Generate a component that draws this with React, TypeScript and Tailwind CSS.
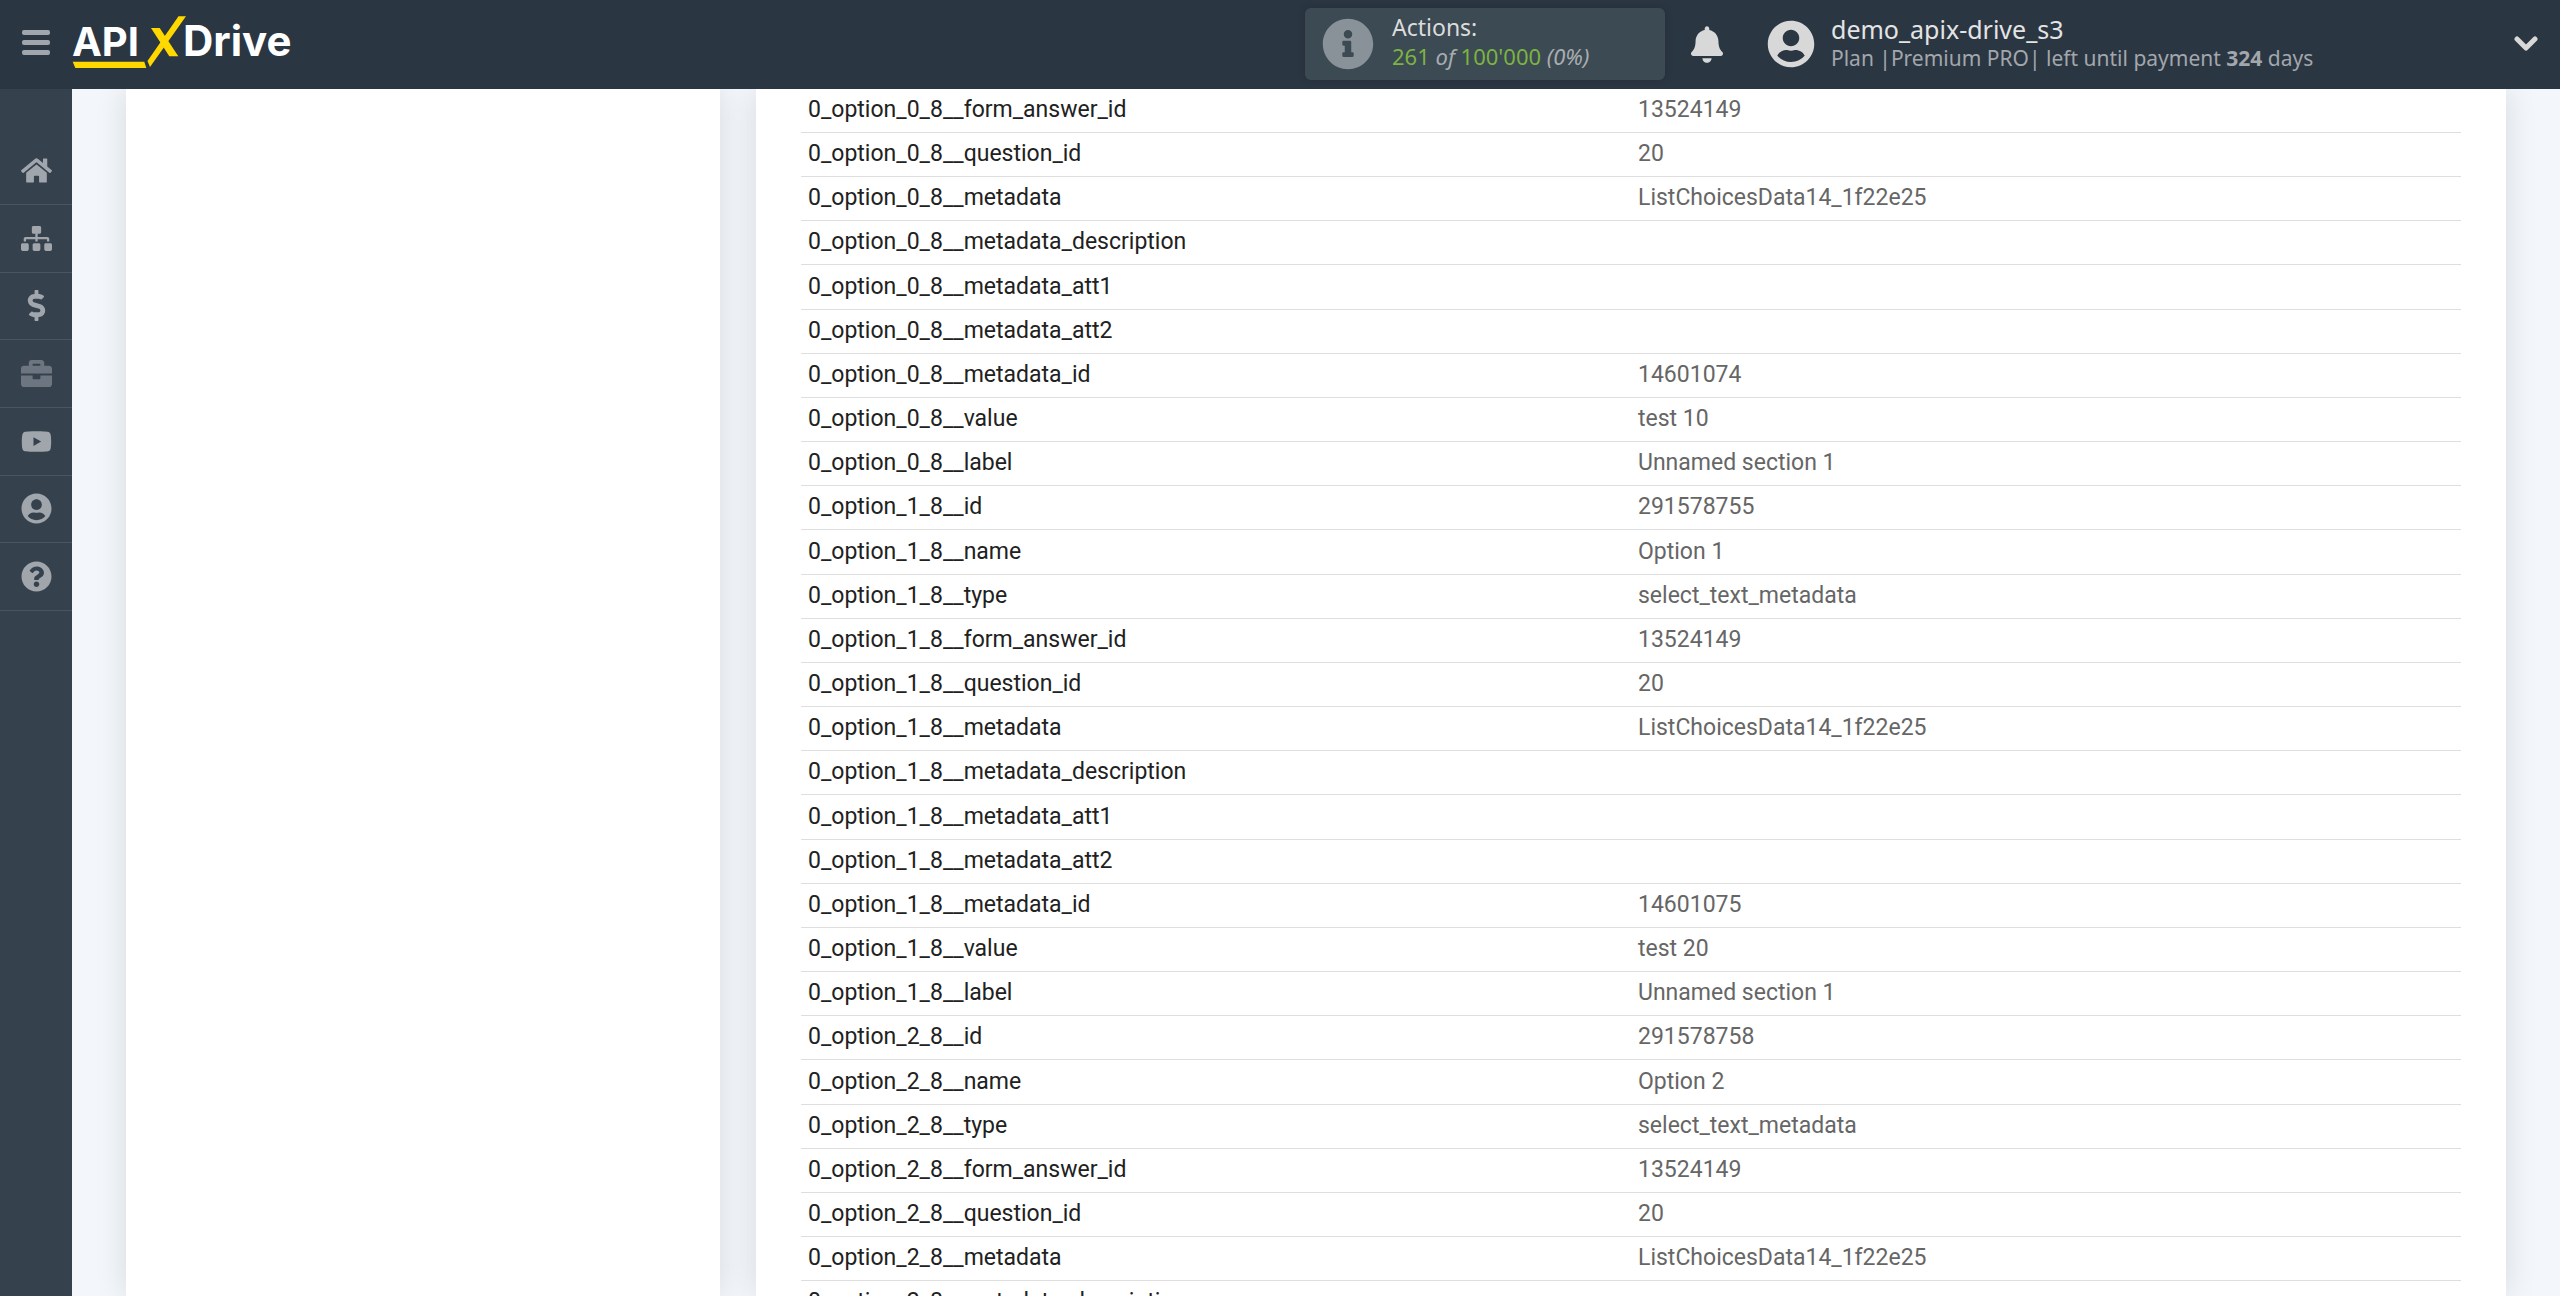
import type { ReactNode } from "react";
import {
  FaBell,
  FaBriefcase,
  FaDollarSign,
  FaHome,
  FaInfoCircle,
  FaQuestionCircle,
  FaSitemap,
  FaUserCircle,
  FaYoutube,
} from "react-icons/fa";

type Row = { name: string; value: string };

const rows: Row[] = [
  { name: "0_option_0_8__form_answer_id", value: "13524149" },
  { name: "0_option_0_8__question_id", value: "20" },
  { name: "0_option_0_8__metadata", value: "ListChoicesData14_1f22e25" },
  { name: "0_option_0_8__metadata_description", value: "" },
  { name: "0_option_0_8__metadata_att1", value: "" },
  { name: "0_option_0_8__metadata_att2", value: "" },
  { name: "0_option_0_8__metadata_id", value: "14601074" },
  { name: "0_option_0_8__value", value: "test 10" },
  { name: "0_option_0_8__label", value: "Unnamed section 1" },
  { name: "0_option_1_8__id", value: "291578755" },
  { name: "0_option_1_8__name", value: "Option 1" },
  { name: "0_option_1_8__type", value: "select_text_metadata" },
  { name: "0_option_1_8__form_answer_id", value: "13524149" },
  { name: "0_option_1_8__question_id", value: "20" },
  { name: "0_option_1_8__metadata", value: "ListChoicesData14_1f22e25" },
  { name: "0_option_1_8__metadata_description", value: "" },
  { name: "0_option_1_8__metadata_att1", value: "" },
  { name: "0_option_1_8__metadata_att2", value: "" },
  { name: "0_option_1_8__metadata_id", value: "14601075" },
  { name: "0_option_1_8__value", value: "test 20" },
  { name: "0_option_1_8__label", value: "Unnamed section 1" },
  { name: "0_option_2_8__id", value: "291578758" },
  { name: "0_option_2_8__name", value: "Option 2" },
  { name: "0_option_2_8__type", value: "select_text_metadata" },
  { name: "0_option_2_8__form_answer_id", value: "13524149" },
  { name: "0_option_2_8__question_id", value: "20" },
  { name: "0_option_2_8__metadata", value: "ListChoicesData14_1f22e25" },
  { name: "0_option_2_8__metadata_description", value: "" },
];

function Logo() {
  return (
    <svg width="224" height="68" viewBox="0 0 224 68" role="img" aria-label="APIXDrive">
      <g fill="#ffffff" fontFamily="Inter, sans-serif" fontWeight="700">
        <text x="0" y="46" fontSize="40">API</text>
        <text x="111" y="46" fontSize="42">Drive</text>
      </g>
      <g fill="#ffd800">
        <path d="M106.500 6.300H114L78 57L75.500 51Z" />
        <path d="M79 18H87.700L106.300 46.300H97.300Z" />
        <path d="M0.700 51.700H72.300L74.300 58H3.300Z" />
      </g>
    </svg>
  );
}

function ChevronDown() {
  return (
    <svg
      width="24"
      height="16"
      viewBox="0 0 24 16"
      fill="none"
      stroke="#d8d8d8"
      strokeWidth="5"
      strokeLinecap="round"
      strokeLinejoin="round"
      aria-hidden="true"
    >
      <path d="M3 3L12 12L21 3" />
    </svg>
  );
}

function NavItem({ label, children, muted }: { label: string; children: ReactNode; muted?: boolean }) {
  return (
    <li className="h-[68px] border-b border-[#4a5561] nth-[3n]:h-[67px]">
      <a
        href="#"
        aria-label={label}
        className={`flex h-full items-center justify-center pb-px ${muted ? "text-[#6c7580]" : "text-[#a0a6ab]"}`}
      >
        {children}
      </a>
    </li>
  );
}

export default function App() {
  return (
    <div className="flex h-screen flex-col overflow-hidden bg-[#f3f6fb] font-['Noto_Sans',sans-serif]">
      <header className="flex h-[89px] shrink-0 items-center bg-[#2b3643] pr-[22px] pb-px">
        <button type="button" aria-label="Menu" className="ml-[22px] flex w-7 flex-col gap-[5px] pb-1">
          <span className="h-[5px] rounded-xs bg-[#a0a6ab]" />
          <span className="h-[5px] rounded-xs bg-[#a0a6ab]" />
          <span className="h-[5px] rounded-xs bg-[#a0a6ab]" />
        </button>
        <a href="#" className="ml-[22px]">
          <Logo />
        </a>
        <div className="mr-[26px] ml-auto flex h-[72px] w-[360px] items-center rounded-md bg-[#3c4a53] pl-[17px] shadow-[0_0_8px_rgba(0,0,0,0.15)]">
          <FaInfoCircle className="size-[52px] shrink-0 text-[#8a9299]" />
          <div className="ml-[18px] pb-1.5">
            <p className="text-[23px] leading-[30px] text-[#dcdcdc]">Actions:</p>
            <p className="text-[22px] leading-[28px] whitespace-pre text-[#a9adb1]">
              <span className="text-[#7cb342]">261</span> <i>of</i>
              <span className="text-[#7cb342]"> 100'000</span> <i>(0%)</i>
            </p>
          </div>
        </div>
        <button type="button" aria-label="Notifications" className="text-[#d8d8d8]">
          <FaBell className="h-[37px] w-8" />
        </button>
        <button type="button" className="ml-11 flex w-[771px] items-center text-left">
          <FaUserCircle className="size-[48px] text-[#d8d8d8]" />
          <span className="ml-4 flex flex-col">
            <span className="text-[25px] leading-[28px] text-[#e4e4e4]">demo_apix-drive_s3</span>
            <span className="text-[21px] leading-[30px] text-[#a2a7ac]">
              Plan |Premium PRO| left until payment <b>324</b> days
            </span>
          </span>
          <span className="ml-auto">
            <ChevronDown />
          </span>
        </button>
      </header>

      <div className="flex min-h-0 flex-1">
        <nav aria-label="Main" className="w-[72px] shrink-0 bg-[#36414e] pt-12">
          <ul>
            <NavItem label="Home"><FaHome className="h-[31px] w-auto" /></NavItem>
            <NavItem label="Connections"><FaSitemap className="h-[31px] w-auto" /></NavItem>
            <NavItem label="Billing"><FaDollarSign className="h-[31px] w-auto" /></NavItem>
            <NavItem label="Services" muted><FaBriefcase className="h-[31px] w-auto" /></NavItem>
            <NavItem label="Video"><FaYoutube className="h-[31px] w-auto" /></NavItem>
            <NavItem label="Profile"><FaUserCircle className="h-[31px] w-auto" /></NavItem>
            <NavItem label="Help"><FaQuestionCircle className="h-[31px] w-auto" /></NavItem>
          </ul>
        </nav>

        <main className="flex flex-1 gap-9 overflow-hidden px-[54px]">
          <aside className="w-[594px] shrink-0 bg-white shadow-[0_0_30px_rgba(0,0,0,0.12)]" />
          <section className="flex-1 bg-white px-[45px] shadow-[0_0_30px_rgba(0,0,0,0.12)]">
            <table className="-mt-px w-full table-fixed border-collapse font-[Roboto,sans-serif] text-[23px] leading-[28px]">
              <tbody>
                {rows.map((row) => (
                  <tr key={row.name} className="h-11 border-b border-[#dedede] nth-[6n+5]:h-[45px]">
                    <th scope="row" className="px-[7px] text-left font-normal text-[#212121]">
                      {row.name}
                    </th>
                    <td className="px-[7px] text-[#666666]">{row.value}</td>
                  </tr>
                ))}
              </tbody>
            </table>
          </section>
        </main>
      </div>
    </div>
  );
}
